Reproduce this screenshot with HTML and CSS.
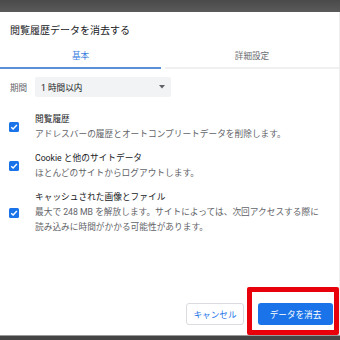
FILE: index.html
```html
<!DOCTYPE html>
<html lang="ja">
<head>
<meta charset="utf-8">
<link rel="stylesheet" href="styles.css">
</head>
<body>
<div class="screen">
  <div class="topbar"></div>
  <div class="dialog">
    <div class="title">閲覧履歴データを消去する</div>
    <div class="tabs">
      <div class="tab tab-active">基本</div>
      <div class="tab tab-idle">詳細設定</div>
    </div>
    <div class="period">
      <span class="period-label">期間</span>
      <div class="select">
        <span>1 時間以内</span>
        <svg class="arrow" width="6" height="4" viewBox="0 0 6 4"><path d="M0 0H6L3 3.5Z" fill="#5f6368"/></svg>
      </div>
    </div>
    <div class="items">
      <div class="item">
        <div class="cb"><svg width="10" height="10" viewBox="0 0 10 10"><path d="M2.2 5.2L4.1 7L7.9 3" fill="none" stroke="#fff" stroke-width="1.4"/></svg></div>
        <div class="text">
          <div class="item-title">閲覧履歴</div>
          <div class="item-desc">アドレスバーの履歴とオートコンプリートデータを削除します。</div>
        </div>
      </div>
      <div class="item">
        <div class="cb"><svg width="10" height="10" viewBox="0 0 10 10"><path d="M2.2 5.2L4.1 7L7.9 3" fill="none" stroke="#fff" stroke-width="1.4"/></svg></div>
        <div class="text">
          <div class="item-title">Cookie と他のサイトデータ</div>
          <div class="item-desc">ほとんどのサイトからログアウトします。</div>
        </div>
      </div>
      <div class="item">
        <div class="cb"><svg width="10" height="10" viewBox="0 0 10 10"><path d="M2.2 5.2L4.1 7L7.9 3" fill="none" stroke="#fff" stroke-width="1.4"/></svg></div>
        <div class="text">
          <div class="item-title">キャッシュされた画像とファイル</div>
          <div class="item-desc">最大で 248 MB を解放します。サイトによっては、次回アクセスする際に<br>読み込みに時間がかかる可能性があります。</div>
        </div>
      </div>
    </div>
    <div class="footer">
      <button class="btn btn-cancel">キャンセル</button>
      <button class="btn btn-primary">データを消去</button>
      <div class="highlight"></div>
    </div>
  </div>
  <div class="bottombar"></div>
</div>
</body>
</html>
```

FILE: styles.css
```css
* { box-sizing: border-box; }
html, body {
  margin: 0;
  padding: 0;
  width: 340px;
  height: 340px;
  overflow: hidden;
  background: #fff;
  font-family: "Roboto", "Noto Sans CJK JP", sans-serif;
}
.screen {
  width: 340px;
  height: 340px;
  display: flex;
  flex-direction: column;
}
.topbar {
  height: 12px;
  flex: none;
  background: linear-gradient(#4a4a4a, #5a5a5a);
}
.dialog {
  flex: 1;
  display: flex;
  flex-direction: column;
  background: #fff;
  border-right: 1px solid #eeeeee;
}
.title {
  padding: 12px 0 0 10px;
  font-size: 10px;
  line-height: 14px;
  color: #202124;
}
.tabs {
  display: flex;
  gap: 4px;
  margin-top: 2px;
}
.tab {
  height: 29px;
  display: flex;
  align-items: center;
  justify-content: center;
  font-size: 8.6px;
  padding-top: 2px;
}
.tab-active {
  width: 161px;
  color: #3b7fe0;
  border-bottom: 2px solid #5b8fd6;
}
.tab-idle {
  flex: 1;
  color: #6a6e72;
  border-bottom: 2px solid #f0f0f0;
  margin-top: 1px;
  height: 28px;
}
.period {
  display: flex;
  align-items: center;
  margin-top: 8px;
  height: 20px;
}
.period-label {
  width: 35px;
  padding-left: 10px;
  font-size: 8.6px;
  color: #5f6368;
}
.select {
  width: 136px;
  height: 20px;
  background: #f1f3f4;
  border-radius: 2px;
  display: flex;
  align-items: center;
  justify-content: space-between;
  padding: 0 6px 0 6px;
  font-size: 8.6px;
  color: #202124;
}
.arrow { display: block; }
.items {
  display: flex;
  flex-direction: column;
  gap: 9px;
  margin-top: 15px;
}
.item {
  display: flex;
  align-items: center;
}
.cb {
  width: 10px;
  height: 10px;
  margin-left: 9px;
  margin-right: 16px;
  background: #1a73e8;
  border-radius: 1.5px;
  flex: none;
}
.cb svg { display: block; }
.text {
  font-size: 8.7px;
  line-height: 15px;
}
.item-title { color: #202124; }
.item-desc { color: #5f6368; white-space: nowrap; }
.footer {
  margin-top: auto;
  position: relative;
  display: flex;
  justify-content: flex-end;
  gap: 14px;
  padding: 0 6px 10px 0;
}
.btn {
  height: 22px;
  border-radius: 3px;
  font-family: "Roboto", "Noto Sans CJK JP", sans-serif;
  font-size: 8.6px;
  padding: 0;
  margin: 0;
}
.btn-cancel {
  width: 58px;
  background: #fff;
  border: 1px solid #dadce0;
  color: #1a73e8;
}
.btn-primary {
  width: 75px;
  background: #1a73e8;
  border: none;
  color: #fff;
}
.highlight {
  position: absolute;
  left: 247px;
  top: -16px;
  width: 92px;
  height: 48px;
  border: 5px solid #e8000b;
  border-radius: 2px;
}
.bottombar {
  height: 5px;
  flex: none;
  background: #454545;
  border-top: 1px solid #9a9a9a;
}
```
